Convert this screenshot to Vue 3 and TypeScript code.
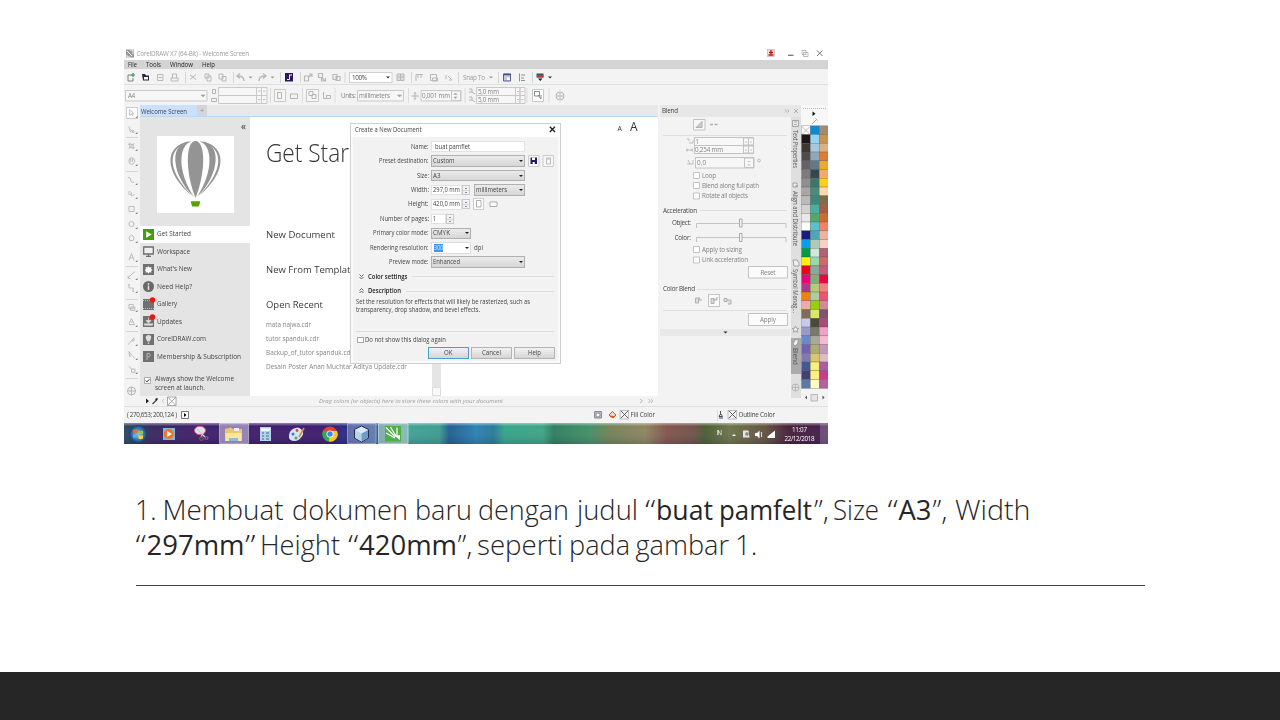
<script setup lang="ts">
import { h } from 'vue'

interface FitProps { t: string; w: number; s?: number; b?: boolean }

// One line of text fitted to an exact width.
const Fit = (p: FitProps) => {
  const s = p.s ?? 6.2
  return h('svg', { width: p.w, height: s * 1.3, style: { display: 'block', overflow: 'visible', flex: 'none' } }, [
    h('text', {
      x: 0, y: s, 'font-size': s, 'font-weight': p.b ? 600 : 400, fill: 'currentColor',
      textLength: p.w, lengthAdjust: 'spacingAndGlyphs',
    }, p.t),
  ])
}
Fit.props = { t: String, w: Number, s: Number, b: Boolean }

interface NavItem { label: string; w: number; icon: string; dot?: boolean }
const nav: NavItem[] = [
  { label: 'Get Started', w: 34, icon: 'play' },
  { label: 'Workspace', w: 33, icon: 'screen' },
  { label: "What's New", w: 35, icon: 'new' },
  { label: 'Need Help?', w: 35, icon: 'info' },
  { label: 'Gallery', w: 20, icon: 'gallery', dot: true },
  { label: 'Updates', w: 25, icon: 'update', dot: true },
  { label: 'CorelDRAW.com', w: 49, icon: 'balloon' },
  { label: 'Membership & Subscription', w: 84, icon: 'member' },
]

const recent = [
  { t: 'mata najwa.cdr', w: 45 },
  { t: 'tutor spanduk.cdr', w: 53 },
  { t: 'Backup_of_tutor spanduk.cdr', w: 87 },
  { t: 'Desain Poster Anan Muchtar Aditya Update.cdr', w: 141 },
]

const swatches: string[][] = [
  ['x', '#0a8ad2', '#a48b6c'], ['#1c1615', '#92d2f6', '#cb9250'], ['#3c3635', '#a9c8df', '#d9b183'],
  ['#4f4b4a', '#8fa9ba', '#e27a34'], ['#666263', '#617a8a', '#f1a832'], ['#7c7a7a', '#364751', '#f9aa62'],
  ['#908e8e', '#3f766a', '#ffd015'], ['#a8a6a6', '#4b8b79', '#fcd9aa'], ['#bcbaba', '#3c897a', '#82694a'],
  ['#d2d0d0', '#49afa0', '#a95a42'], ['#e9e7e7', '#50a86a', '#d16a2d'], ['#ffffff', '#59c0d0', '#f18363'],
  ['#1a1a80', '#49a8b9', '#f1b19a'], ['#04a0ea', '#b1c9b9', '#f8d1c2'], ['#049a46', '#d0e8d8', '#b16273'],
  ['#fff20a', '#99d8a9', '#d1696a'], ['#e60818', '#89a99a', '#c95a79'], ['#e4057f', '#8aa97a', '#e6083e'],
  ['#a93b89', '#b8c879', '#f08282'], ['#f08208', '#b1c9a1', '#f05272'], ['#f4a9a9', '#98d008', '#d18a99'],
  ['#826a5a', '#d8e869', '#825272'], ['#c9c9e8', '#4a4a3a', '#a94a79'], ['#9999cc', '#79796a', '#f0a1c8'],
  ['#6989c8', '#a9a999', '#f8b9d1'], ['#7162b1', '#b1a972', '#c19ab9'], ['#8179b1', '#d8c869', '#e1b9c9'],
  ['#425a91', '#f8f079', '#b15aa1'], ['#424272', '#fff082', '#c93b91'], ['#5a79a9', '#fffcc2', '#b162a1'],
]

const toolSlots = [113, 129, 146, 161, 180, 194, 209, 224, 238, 257, 275, 288, 307, 322, 341, 355, 369]
const toolPaths = [
  'M-2-4L-2 3L0 1L2 4M-2-4L3 1H0', 'M-3-3L-1 4M-2 0L1 3M1 2h2v2h-2z', 'M-4-2H2V4M-2-4V2H4M-3 3L3-3',
  'M-3 0Q-3-4 0-4T4 0Q3 4 0 4T-3 0M-1-3V1M1-3V1', 'M-4-3Q-1-3-1 0T3 3', 'M-4-2Q0-4 0 0T4 0M-4 0Q-1-1 0 2',
  'M-3-3H3V3H-3z', 'M-3 0A3 3 0 1 0 3 0A3 3 0 1 0-3 0', 'M-3-1L0-3.5L3-1L2 3H-2z', 'M-3 4L0-4L3 4M-2 1H2',
  'M-4 3L4-4M-4 1V4H-1', 'M-3-4V0H2V4M-4-4H-2M1 4H3', 'M-3-3H2V2H-3zM-1 0H4V4H-1z', 'M-3 2L0-4L3 2M-3 3H4M-1 0H2',
  'M-4 4L0 0L3-4M0 0H3V-3', 'M-3-4L0 0L-2 2zM1 1L4 4', 'M-3-3L0 0H4V4H0V0',
]
const toolSeps = [137, 171, 266, 299, 331, 378]

const tabSpecs = [
  { t: 'Text Properties', y: 130, w: 38 }, { t: 'Align and Distribute', y: 191, w: 55 },
  { t: 'Symbol Manag...', y: 269, w: 44 }, { t: 'Blend', y: 348, w: 17 },
]

interface Run { t: string; x: number; y: number; w: number; b?: boolean }
const caption: Run[] = [
  { t: '1.', x: 135, y: 520, w: 21.5 }, { t: 'Membuat', x: 162.5, y: 520, w: 121 }, { t: 'dokumen', x: 292, y: 520, w: 116 },
  { t: 'baru', x: 415, y: 520, w: 57 }, { t: 'dengan', x: 478, y: 520, w: 91 }, { t: 'judul', x: 577, y: 520, w: 61 },
  { t: '“', x: 645, y: 520, w: 10.5 }, { t: 'buat', x: 656, y: 520, w: 57, b: true },
  { t: 'pamfelt', x: 719, y: 520, w: 93, b: true }, { t: '”,', x: 814, y: 520, w: 15 },
  { t: 'Size', x: 833, y: 520, w: 46 }, { t: '“', x: 887.5, y: 520, w: 10.5 },
  { t: 'A3', x: 898.5, y: 520, w: 33, b: true }, { t: '”,', x: 932.5, y: 520, w: 15 }, { t: 'Width', x: 955, y: 520, w: 75.5 },
  { t: '“', x: 135.5, y: 555, w: 10.5 }, { t: '297mm', x: 146.5, y: 555, w: 98, b: true }, { t: '”', x: 245, y: 555, w: 10.5 },
  { t: 'Height', x: 260, y: 555, w: 80 }, { t: '“', x: 348, y: 555, w: 10.5 }, { t: '420mm', x: 359, y: 555, w: 98, b: true },
  { t: '”,', x: 457.5, y: 555, w: 15 }, { t: 'seperti', x: 477, y: 555, w: 86 }, { t: 'pada', x: 569, y: 555, w: 61 },
  { t: 'gambar', x: 635.5, y: 555, w: 93.5 }, { t: '1.', x: 735, y: 555, w: 22.5 },
]
</script>

<template>
  <main class="slide">
    <section class="shot">
      <!-- title bar -->
      <svg class="bar" width="704" height="12" viewBox="124 48 704 12">
        <path d="M126 49.5h8v8h-8z" fill="#9b9b9b" /><path d="M127 51l5 5M127 55v2h3M130 50h3v4" stroke="#eee" fill="none" />
        <text class="lt" x="136.500" y="56" textLength="112.500">CorelDRAW X7 (64-Bit) - Welcome Screen</text>
        <rect x="767.500" y="49.500" width="7" height="7" fill="#f4dede" stroke="#c9a5a5" stroke-width=".6" />
        <path d="M771 50v4M769 52.500h4M768.500 55h5" stroke="#c01515" stroke-width="1.300" />
        <path d="M788 55.300h5.500" stroke="#777" stroke-width="1.300" />
        <path d="M802 50.500h4v4h-4zM803.500 52.500h4.500v4h-4.500z" fill="#fff" stroke="#aaa" stroke-width=".8" />
        <path d="M817 50.500l5.500 5.500M822.500 50.500l-5.500 5.500" stroke="#777" stroke-width="1" />
      </svg>
      <!-- menu -->
      <nav class="menu">
        <Fit t="File" :w="9" /><Fit t="Tools" :w="15" /><Fit t="Window" :w="23" /><Fit t="Help" :w="13" />
      </nav>
      <!-- standard toolbar -->
      <svg class="bar tool" width="704" height="15" viewBox="124 69 704 15">
        <path d="M185.500 72v11M233.500 72v11M280.500 72v11M300.500 72v11M345 72v11M411.500 72v11M458.500 72v11M498.500 72v11M532.500 72v11" stroke="#d5d5d5" />
        <path d="M128 75h4M128 75v6h5v-3" fill="none" stroke="#666" stroke-width=".8" /><path d="M133 73v4M131 75h4" stroke="#2c9a4a" stroke-width="1.200" />
        <path d="M142 74h3l1 1.500h3v5h-6z" fill="#292439" /><path d="M144 77h4v2.500h-4z" fill="#fff" />
        <g fill="none" stroke="#b9b9b9">
          <path d="M157.500 74.500h5.500v6h-5.500zM158.500 77.500h3.500M171 78h7v3h-7zM172.500 78v-4h4v4" />
          <path d="M190 75l6 4.500M190 79.500l6-5M205 74h4v4h-4zM207 76h4v5h-4zM219 74h4v5h-4zM222 76.500h4v4.500h-4z" />
          <path d="M244 81q0-5-6-5M240 73.500l-3 2.500l3 2.500" stroke-width="1.400" /><path d="M259 81q0-5 6-5M263 73.500l3 2.500l-3 2.500" stroke-width="1.400" />
          <path d="M304.500 76h4v5h-4zM308 78l4-4M309 74h3v3M318.500 73.500h4v4h-4zM322 78l3 3M321.500 77v4h4v-3M333 74.500h4v5h-4zM336 76.500h4v4h-4z" stroke-width="1.200" />
          <path d="M397 74h7v6.500h-7zM397 77h7M400.500 74v7" fill="#ddd" />
          <path d="M416 81v-6.500h7M418 75v3M421 75v3M430.500 74.500h6v6h-6zM432.500 78h5v3h-5zM446 75v4M448 76l4 4M449 80h3" />
        </g>
        <rect x="285" y="73" width="8" height="8.500" fill="#2c1660" /><path d="M289.500 74.500v5h-2.500M290 75h2" stroke="#fff" fill="none" />
        <rect x="349.500" y="72.500" width="42.500" height="10" fill="#fff" stroke="#d0d0d0" />
        <text x="352" y="79.700" textLength="15" class="dk">100%</text>
        <path d="M248.500 76.500h4l-2 2zM270.500 76.500h4l-2 2zM489 76.500h4l-2 2z" fill="#999" /><path d="M386 76.500h4l-2 2zM548 76.500h4l-2 2z" fill="#333" />
        <text x="463" y="79.700" textLength="22" class="lt">Snap To</text>
        <path d="M503.500 74h7v7h-7z" fill="#c5c9e6" stroke="#58589a" /><path d="M503.500 74.500h7.500" stroke="#494980" stroke-width="1.500" /><path d="M507 77.500h3v2.500h-3z" fill="#fff" />
        <path d="M519.500 73.500v8M521 75h4M521 78h3M521 80.500h4" stroke="#7b9d8b" /><path d="M536.500 73.500h7v4h-7z" fill="#3f4a80" /><path d="M537 75h6.500v2.500h-6.500z" fill="#c33" /><path d="M538 78.500h4.500l-2.200 2.500z" fill="#222" />
      </svg>
      <!-- property bar -->
      <svg class="bar tool line" width="704" height="21" viewBox="124 84 704 21">
        <path d="M270.500 88v15M302.500 88v15M335 88v15M408.500 88v15M465 88v15M527 88v15M549 88v15" stroke="#dcdcdc" />
        <g fill="#f6f6f6" stroke="#c9c9c9">
          <path d="M125.500 90.500h81.500v10.500h-81.500zM218.500 87.500h38v8h-38zM218.500 95.500h38v8h-38zM256.500 87.500h5v8h-5zM261.500 87.500h5.500v8h-5.500zM256.500 95.500h5v8h-5zM261.500 95.500h5.500v8h-5.500z" />
          <path d="M274.500 89.500h11v12h-11zM306.500 89.500h12v12h-12zM357.500 90.500h46v10.500h-46zM421 90.500h40v10.500h-40zM451.500 91h9v9.500h-9z" />
          <path d="M476.500 87.500h39v8h-39zM476.500 95.500h39v8h-39zM515.500 87.500h4.500v8h-4.500zM520 87.500h5v8h-5zM515.500 95.500h4.500v8h-4.500zM520 95.500h5v8h-5z" />
          <path d="M532.500 89.500h11v12h-11z" fill="#fff" />
        </g>
        <g fill="none" stroke="#b4b4b4">
          <path d="M212.500 89.500h3v4h-3zM211.500 98.500h5v3h-5zM277.500 92.500h4v6h-4zM290.500 94h7v4.500h-7z" /><path d="M309 91.500h4v4h-4zM312 94.500h4v4h-4zM323.500 92v6.500h7v-3h-4v3" />
          <path d="M411.500 96h7.500M415 92.500v7M414 93.500l1-1l1 1M414 98.500l1 1l1-1M469 89h3v3h-3M472 92l3 2M469 97h3v3h-3M472 100l3 2" />
          <path d="M534.500 91.500h5v4.500h-5zM538 95l3 4v-4" stroke="#6b7177" stroke-width=".8" /><circle cx="560" cy="96" r="4" /><path d="M556 96h8M560 92v8" />
        </g>
        <path d="M201 95h4l-2 2zM397.500 95h4l-2 2zM454 94.500h3l-1.500-1.500zM454 97h3l-1.500 1.500zM258 91h2.500M263 91h2.500M258 99.500h2.500M263 99.500h2.500M517 91.500h2M521.500 91.500h2M517 99.500h2M521.500 99.500h2" fill="#999" stroke="#aaa" stroke-width=".7" />
        <text x="128" y="98.200" textLength="7">A4</text><text x="341" y="98.200" textLength="15">Units:</text><text x="359" y="98.200" textLength="31">millimeters</text>
        <text x="422" y="98.200" textLength="28">0,001 mm</text><text x="478" y="93.700" textLength="21">5,0 mm</text><text x="478" y="102" textLength="21">5,0 mm</text>
      </svg>

      <div class="work">
        <!-- toolbox -->
        <svg class="toolbox" width="16" height="301" viewBox="124 105 16 301">
          <rect x="126.500" y="107.500" width="11" height="11" fill="#fff" stroke="#ccc" />
          <g v-for="(y, i) in toolSlots" :key="i" :transform="`translate(131.5 ${y}) scale(.85)`">
            <path :d="toolPaths[i]" fill="none" stroke="#b8b8b8" stroke-width="1.100" /><path d="M7 3.500v2.500h-2.500z" fill="#777" />
          </g>
          <path v-for="y in toolSeps" :key="y" :d="`M126 ${y}.5h12`" stroke="#d6d6d6" />
          <circle cx="131.500" cy="391" r="4" fill="none" stroke="#b5b5b5" /><path d="M127.500 391h8M131.500 387v8" stroke="#b5b5b5" />
        </svg>

        <div class="centre">
          <header class="tabs"><div class="tab"><Fit t="Welcome Screen" :w="46" /></div><div class="plus">+</div></header>
          <div class="welcome">
            <aside class="side">
              <div class="collapse">«</div>
              <svg class="logo" width="77" height="77" viewBox="157 136 77 77">
                <rect x="157" y="136" width="77" height="77" fill="#fff" />
                <g transform="translate(195.500 141)" fill="#949494">
                  <path d="M0 0C-10 0-10.500 31 0 57C10.500 31 10 0 0 0z" />
                  <path d="M-4 .5C-26-1-26 32-1.500 56C-18 31-17.500 4-4 .5zM4 .5C26-1 26 32 1.500 56C18 31 17.500 4 4 .5z" />
                  <path d="M-8 1C-31 5-32 32-3 55C-28.500 30-28.500 8-8 1zM8 1C31 5 32 32 3 55C28.500 30 28.500 8 8 1z" />
                </g>
                <path d="M190.700 201.200h9.600l-1.400 5.400h-6.800z" fill="#55a300" />
              </svg>
              <ul class="nav">
                <li v-for="n in nav" :key="n.label" :class="{ on: n.icon === 'play' }">
                  <svg width="11" height="11" viewBox="0 0 11 11">
                    <g v-if="n.icon === 'play'"><rect width="11" height="11" fill="#469c10" /><path d="M3.200 2.200l5.500 3.300l-5.500 3.300z" fill="#fff" /></g>
                    <g v-else-if="n.icon === 'screen'" fill="none" stroke="#6d6d6d"><path d="M.7 1h9.600v7h-9.600z" fill="#eee" stroke-width="1.300" /><path d="M5.500 8v2M3 10.300h5" stroke-width="1.200" /></g>
                    <g v-else-if="n.icon === 'info'"><circle cx="5.500" cy="5.500" r="5.500" fill="#686868" /><path d="M5.500 2v1.700M5.500 4.500v4.500" stroke="#ddd" stroke-width="1.500" /></g>
                    <g v-else>
                      <rect width="11" height="11" fill="#707070" />
                      <path v-if="n.icon === 'new'" d="M5.500 2l1 1.500l2-.5l-.5 2l1.500 1l-1.500 1l.5 1.500l-2-.3l-1 1.500l-1-1.500l-2 .3l.5-1.500l-1.500-1l1.500-1l-.5-2l2 .5z" fill="#fff" />
                      <path v-if="n.icon === 'gallery'" d="M0 1.500h11M0 9.500h11" stroke="#bbb" stroke-dasharray="1 1" />
                      <path v-if="n.icon === 'update'" d="M5.500 1.500v3.500M3 4.500l2.500 2.700l2.500-2.700zM1.500 7.500v1.700h8v-1.700" stroke="#ddd" fill="#ddd" stroke-width=".7" />
                      <path v-if="n.icon === 'balloon'" d="M5.500 1C1.500 1 2.500 5 4.500 7.500h2C8.500 5 9.500 1 5.500 1zM4.700 8.500h1.600v1.200h-1.600z" fill="#ddd" />
                      <path v-if="n.icon === 'member'" d="M4 9v-6.500h2.500q1.500 1.800 0 3.300h-2.500" stroke="#b5b5b5" fill="none" />
                    </g>
                    <circle v-if="n.dot" cx="9.500" cy="1" r="2.700" fill="#f5120c" />
                  </svg>
                  <Fit :t="n.label" :w="n.w" />
                </li>
              </ul>
              <div class="always">
                <svg width="7" height="7" viewBox="0 0 7 7"><path d="M.5.5h6v6h-6z" fill="#fff" stroke="#999" stroke-width=".8" /><path d="M1.700 3.500l1.300 1.500l2.500-3" fill="none" stroke="#333" stroke-width=".9" /></svg>
                <div><Fit t="Always show the Welcome" :w="79" /><Fit t="screen at launch." :w="50" /></div>
              </div>
            </aside>
            <article class="page">
              <div class="sizes"><span>A</span><span class="big">A</span></div>
              <div class="h1"><Fit t="Get Star" :w="83" :s="25.500" /></div>
              <div class="h2"><Fit t="New Document" :w="69" :s="9.800" /></div>
              <div class="h2"><Fit t="New From Templat" :w="84.500" :s="9.800" /></div>
              <div class="h2 last"><Fit t="Open Recent" :w="57" :s="9.800" /></div>
              <div v-for="r in recent" :key="r.t" class="rec"><Fit :t="r.t" :w="r.w" :s="6.300" /></div>
              <div class="scroll"><i /></div>
            </article>
          </div>
          <svg class="drag" width="520" height="10" viewBox="140 396 520 10">
            <path d="M146 398.500l3 2.500l-3 2.500z" fill="#222" /><path d="M152.500 404l4-4" stroke="#444" stroke-width="1.200" /><path d="M155 399l2-1l1 1l-1.500 2z" fill="#222" />
            <path d="M164 399l-2 2l2 2" stroke="#ccc" fill="none" /><path d="M167.500 397h8.500v8.500h-8.500zM167.500 397l8.500 8.500M176 397l-8.500 8.500" fill="#fff" stroke="#888" stroke-width=".7" />
            <text x="319" y="403.200" textLength="184" class="it">Drag colors (or objects) here to store these colors with your document</text>
            <path d="M640 399l2.500 2l-2.500 2M648.500 399l1.800 2l-1.800 2M651 399l1.800 2l-1.800 2" stroke="#bbb" fill="none" />
          </svg>
        </div>

        <!-- blend docker -->
        <svg class="docker" width="168" height="301" viewBox="660 105 168 301">
          <rect x="660" y="105" width="141" height="12" fill="#e7e7e7" />
          <rect x="660" y="117" width="131" height="289" fill="#f3f3f3" />
          <rect x="791" y="117" width="10" height="281" fill="#dfdfdf" />
          <rect x="791" y="338" width="10" height="36" fill="#ababab" />
          <rect x="801" y="105" width="27" height="21" fill="#f7f7f7" />
          <rect x="660" y="329" width="130" height="7" fill="#e8e8e8" />
          <text x="662" y="113.300" textLength="16" class="dk">Blend</text>
          <path d="M785 109.500l1.500 1.500l-1.500 1.500M787.500 109.500l1.500 1.500l-1.500 1.500M794 109l4 4M798 109l-4 4" stroke="#999" fill="none" stroke-width=".7" />
          <g stroke="#dedede"><path d="M663 135.500h124M700 210.500h87M697 289.500h90M663 310.500h124" /></g>
          <g fill="#f7f7f7" stroke="#c3c3c3">
            <path d="M693.500 119.500h11.500v10.500h-11.500zM694.500 137.500h59v8h-59zM694.500 145.500h59v8h-59zM695.500 157.500h58.500v10.500h-58.500zM743.500 138h5v7h-5zM748.500 138h5v7h-5zM743.500 146h5v7h-5zM748.500 146h5v7h-5zM744.500 158h9v9.500h-9z" />
            <path d="M693.500 172.500h6v6h-6zM693.500 182.500h6v6h-6zM693.500 193h6v6h-6zM693.500 246.500h6v6h-6zM693.500 257h6v6h-6z" fill="#fff" />
            <path d="M748.500 266.500h39v11.500h-39zM748.500 313.500h39v12h-39zM708.500 294.500h11v12h-11z" fill="#fbfbfb" />
            <path d="M696.500 228v-4.500h89.500v4.500M696.500 242v-4.500h89.500v4.500" fill="none" />
            <path d="M739.500 219h2.500v8h-2.500zM739.500 233.500h2.500v8h-2.500z" stroke="#a9a9a9" />
          </g>
          <g fill="none" stroke="#b0b0b0">
            <path d="M696 127.500l6-6v6z" fill="#ccc" /><path d="M710 124.500h3M714.500 124.500h3" stroke-width="1.500" /><path d="M687 139h2v2M689 143h4v-3M686 150h7M687 148.500v3M692 148.500v3M688 160l2 4h3v-4M687 164h3" stroke-width=".8" />
            <path d="M695.500 298h3v5h-3zM699 297v3h3M711 298.500h3v5h-3zM713 300h4v-3M724 298.500h3v3h-3zM727 300h4v4h-3" fill="#ddd" />
            <path d="M745 142h2M750 142h2M745 150h2M750 150h2M747.500 161.500h3M747.500 165h3" stroke-width=".7" /><circle cx="759" cy="160.500" r="1.400" stroke-width=".8" />
          </g>
          <g class="mid">
            <text x="695.500" y="143.700">1</text><text x="695" y="152" textLength="28">0,254 mm</text><text x="697" y="165.300" textLength="9">0,0</text>
            <text x="702" y="177.700" textLength="14">Loop</text><text x="702" y="187.800" textLength="57">Blend along full path</text><text x="702" y="198.300" textLength="46">Rotate all objects</text>
            <text x="702" y="251.700" textLength="40">Apply to sizing</text><text x="702" y="262.200" textLength="46">Link acceleration</text>
            <text x="760.500" y="274.500" textLength="15">Reset</text><text x="760" y="321.700" textLength="16">Apply</text>
          </g>
          <g class="dk"><text x="663" y="212.600" textLength="34">Acceleration</text><text x="672" y="225" textLength="19">Object:</text><text x="674.500" y="239.500" textLength="16.500">Color:</text><text x="663" y="291" textLength="32">Color Blend</text></g>
          <path d="M723.500 331.500h4l-2 2z" fill="#222" />
          <text v-for="s in tabSpecs" :key="s.t" :transform="`translate(793.3 ${s.y}) rotate(90)`" :textLength="s.w" lengthAdjust="spacingAndGlyphs" class="vt">{{ s.t }}</text>
          <g fill="#eee" stroke="#888" stroke-width=".7">
            <path d="M792.500 120.500h6v6h-6zM794 122h3M794 124.500h3M793 183h4v4h-4zM795 186h3M793 260h4l2 3v3h-5z" />
            <path d="M795.500 326l1 2.200l2.300.3l-1.800 1.500l.5 2.300l-2-1.200l-2 1.200l.5-2.300l-1.800-1.500l2.300-.3zM793 344l2-4l3-1v4l-3 3z" /><path d="M792 387.500h7M795.500 384v7M792 387.500a3.500 3.500 0 1 0 7 0a3.500 3.500 0 1 0-7 0" stroke="#aaa" fill="none" />
          </g>
          <path d="M803 108.500h24" stroke="#bbb" stroke-dasharray="1 1" /><path d="M812.500 111.500l3 2.200l-3 2.200z" fill="#111" /><path d="M812 124l4.500-4.500M815.500 118.500l2 2" stroke="#aaa" />
          <g v-for="(row, r) in swatches" :key="r">
            <g v-for="(c, k) in row" :key="k">
              <rect :x="801.5 + k * 8.9" :y="125.8 + r * 8.75" width="8.9" height="8.75" :fill="c === 'x' ? '#fff' : c" stroke="#4a4a4a" stroke-opacity=".55" stroke-width=".5" />
            </g>
          </g>
          <path d="M802 126.500l8 8M810 126.500l-8 8" stroke="#888" stroke-width=".6" />
          <path d="M807 395.500v4l-2-2zM822.500 395.500v4l2-2z" fill="#555" /><path d="M811 394.500h6.500v6.500h-6.500z" fill="#e5e5e5" stroke="#aaa" stroke-width=".8" />
        </svg>
      </div>

      <!-- status bar -->
      <svg class="bar tool line" width="704" height="17" viewBox="124 406 704 17">
        <g class="dk"><text x="127" y="417" textLength="50">( 270,653; 200,124 )</text><text x="630.500" y="417" textLength="24.500">Fill Color</text><text x="738.500" y="417" textLength="36.500">Outline Color</text></g>
        <path d="M181.500 411.500h7v7h-7z" fill="#fff" stroke="#555" stroke-width=".8" /><path d="M184 413l2.500 2l-2.500 2z" fill="#000" />
        <path d="M594.500 411.500h7v6.500h-7z" fill="#b8b8c8" stroke="#8a8aa0" /><circle cx="598" cy="415" r="2" fill="#fff" stroke="#8a6868" stroke-width=".7" />
        <path d="M609 415l3.500-3.500l3.500 3.500l-3 3z" fill="#f5d8c5" stroke="#79493a" stroke-width=".8" /><path d="M610 416.500h5" stroke="#e05a12" stroke-width="1.300" />
        <path d="M620.500 410.500l8 8M628.500 410.500l-8 8M728.500 410.500l8 8M736.500 410.500l-8 8" fill="none" stroke="#555" stroke-width=".9" /><path d="M620 410.500h8.500v8.500h-8.500zM728 410.500h8.500v8.500h-8.500z" fill="none" stroke="#aaa" stroke-width=".7" />
        <path d="M717.500 410v11" stroke="#ddd" /><path d="M720.500 411v3l-1.500 2.500h3.500l-1.500-2.500M719 418h4" stroke="#333a50" fill="none" stroke-width=".9" />
      </svg>

      <!-- taskbar -->
      <svg class="bar" width="704" height="21" viewBox="124 423 704 21">
        <defs>
          <linearGradient id="wall" gradientUnits="userSpaceOnUse" x1="124" x2="828" y1="0" y2="0">
            <stop offset="0" stop-color="#2e4a62" /><stop offset=".04" stop-color="#3a2a60" /><stop offset=".09" stop-color="#40216b" /><stop offset=".28" stop-color="#3f1d70" />
            <stop offset=".315" stop-color="#2c2c83" /><stop offset=".36" stop-color="#35618f" /><stop offset=".405" stop-color="#41a397" /><stop offset=".448" stop-color="#3d9f91" />
            <stop offset=".462" stop-color="#235f92" /><stop offset=".5" stop-color="#2e82b4" /><stop offset=".525" stop-color="#2b7b9a" /><stop offset=".54" stop-color="#36a58a" />
            <stop offset=".595" stop-color="#3fa585" /><stop offset=".61" stop-color="#2f7f62" /><stop offset=".66" stop-color="#439168" /><stop offset=".69" stop-color="#73835a" />
            <stop offset=".74" stop-color="#8f8660" /><stop offset=".77" stop-color="#84564e" /><stop offset=".81" stop-color="#70534b" /><stop offset=".825" stop-color="#4c5e35" />
            <stop offset=".86" stop-color="#6d754c" /><stop offset=".91" stop-color="#665443" /><stop offset=".945" stop-color="#48203b" /><stop offset="1" stop-color="#432050" />
          </linearGradient>
          <linearGradient id="glass" x2="0" y2="1"><stop offset="0" stop-color="#fff" stop-opacity=".45" /><stop offset=".15" stop-color="#fff" stop-opacity="0" /><stop offset="1" stop-color="#101030" stop-opacity=".15" /></linearGradient>
          <radialGradient id="orb"><stop offset="0" stop-color="#8fd0f0" /><stop offset=".7" stop-color="#2d6ea8" /><stop offset="1" stop-color="#183c68" /></radialGradient>
        </defs>
        <rect x="124" y="423" width="704" height="21" fill="url(#wall)" /><rect x="124" y="423" width="704" height="21" fill="url(#glass)" />
        <circle cx="138" cy="434" r="9" fill="url(#orb)" />
        <path d="M133 430q2.500-1.500 4.500 0v3.500q-2.500-1-4.500 0z" fill="#f06a30" /><path d="M138.500 430.500q2 1.500 4.500 0v3.500q-2.500 1.300-4.500 0z" fill="#98c848" /><path d="M133 434.500q2.500-1 4.500 0v3.500q-2-1.300-4.500 0z" fill="#55b0f0" /><path d="M138.500 435q2.500 1.200 4.500 0v3.500q-2.500 1.300-4.500 0z" fill="#f9cf45" />
        <path d="M163 428h12v12h-12z" fill="#87b3df" /><circle cx="168.800" cy="434" r="5" fill="#ed7625" /><path d="M167 431l5 3l-5 3z" fill="#fff" />
        <ellipse cx="200" cy="430.500" rx="5.500" ry="4.200" fill="#efdde7" stroke="#d35a83" /><path d="M197 429l8 8M203 433l-2 4" stroke="#c3cbdf" stroke-width="1.200" /><circle cx="201.500" cy="438.500" r="1.800" fill="none" stroke="#d84555" /><circle cx="206.500" cy="438" r="1.500" fill="none" stroke="#6f7ba5" />
        <path d="M219.500 423.500h29v20h-29z" fill="#c6bfe3" opacity=".62" stroke="#eee" /><path d="M225 429l6-1.500l2 1.500h9v12h-17z" fill="#e9c868" /><path d="M225.500 433h16v8h-16z" fill="#fae6a0" /><path d="M229 441v-3h9v3z" fill="#87bedc" /><path d="M234 428h5v3h-5z" fill="#eef" />
        <path d="M260 427h11v14h-11z" fill="#b7d3ea" /><path d="M261 428.500h9v2.500h-9z" fill="#f5fbff" /><path d="M262 433h2M266 433h3M262 436h2M266 436h3M262 439h2M266 439h3" stroke="#638fb8" stroke-width="1.500" />
        <path d="M289 435q1-7 9-7.500q6 2 5 7q-3 6-8 6.500q-7 0-6-6z" fill="#d5e5f4" /><circle cx="293" cy="434" r="1.500" fill="#3f7bd0" /><circle cx="297" cy="430.500" r="1.400" fill="#da4a40" /><circle cx="296" cy="438" r="1.500" fill="#48a850" /><path d="M304 428l-5 9" stroke="#d88b35" stroke-width="1.600" />
        <circle cx="330" cy="434" r="7.500" fill="#e34234" /><path d="M330 434L323.500 430A7.500 7.500 0 0 0 329 441.500z" fill="#35a853" /><path d="M330 434h7.500A7.500 7.500 0 0 1 329 441.500z" fill="#fbc62a" /><path d="M331 431h6a7.500 7.500 0 0 1-8 10.500z" fill="#fbc62a" /><circle cx="330" cy="434" r="3.500" fill="#fff" /><circle cx="330" cy="434" r="2.700" fill="#4387ee" />
        <path d="M347.500 423.500h28.500v20h-28.500z" fill="#8c9bcf" opacity=".55" stroke="#dde" /><path d="M361.500 426l7 3.500v8.500l-7 4l-7-4v-8.500z" fill="#dce9f4" stroke="#20304f" /><path d="M361.500 433.500v8l-6.500-3.800v-7.700z" fill="#b9d3e6" /><path d="M361.500 433.500v8l6.500-3.800v-7.700z" fill="#6e9cc6" />
        <path d="M378.500 423.500h29.500v20h-29.500z" fill="#a7cac6" opacity=".7" stroke="#dee" /><path d="M385 426h16v15.500h-16z" fill="#4fae48" /><path d="M386 427.500l9 9M390.500 427l6 10M397 427.500v9M386 433l9 5" stroke="#fff" stroke-width="1.200" /><path d="M395 436l5 4v-5z" fill="#fff" />
        <g fill="#fff">
          <text x="717" y="435" class="wt" textLength="5">IN</text><path d="M732 436h4l-2-2z" /><path d="M743 430.500h5.500l1 7h-6.500z" fill="#e5e5e8" /><path d="M746 432l3 1l-1 3l-3-1z" fill="#888" />
          <path d="M755 433h2l2.500-2.500v8l-2.500-2.500h-2zM761 432v5h.8v-5zM767.500 438v-1.500l7.500-6v7.500z" />
          <text x="792" y="432.300" class="wt" textLength="15">11:07</text><text x="784.500" y="441" class="wt" textLength="30">22/12/2018</text>
        </g>
        <path d="M820.500 424h7v19.500h-7z" fill="#b79cc4" opacity=".35" stroke="#cbb5d5" stroke-width=".7" />
      </svg>

      <!-- dialog -->
      <div class="dialog">
        <header><Fit t="Create a New Document" :w="66.500" /><svg width="7" height="7" viewBox="0 0 7 7"><path d="M.8.8l5.200 5.200M6 .8L.8 6" stroke="#222" stroke-width="1.400" /></svg></header>
        <div class="form">
          <div class="row"><label><Fit t="Name:" :w="17.500" /></label><div class="in wide"><Fit t="buat pamflet" :w="35" /></div></div>
          <div class="row"><label><Fit t="Preset destination:" :w="49.500" /></label><div class="sel wide"><Fit t="Custom" :w="21.500" /></div>
            <svg class="gap" width="26" height="12" viewBox="0 0 26 12"><path d="M.5.5h10.500v11H.5zM15 .5h10.500v11H15z" fill="#f7f7f7" stroke="#ccc" /><path d="M2.500 2.500h6.500v6.500h-6.500z" fill="#251c58" /><path d="M4 2.500h3v2.500h-3zM4.700 7h2v2h-2z" fill="#fff" /><path d="M18.500 4h4v5h-4zM18 3h5" fill="none" stroke="#bbb" /></svg></div>
          <div class="row"><label><Fit t="Size:" :w="12" /></label><div class="sel wide"><Fit t="A3" :w="7.500" /></div></div>
          <div class="row"><label><Fit t="Width:" :w="18" /></label><div class="in num"><Fit t="297,0 mm" :w="27" /></div><i class="spin" /><div class="sel unit"><Fit t="millimeters" :w="31" /></div></div>
          <div class="row"><label><Fit t="Height:" :w="20.500" /></label><div class="in num"><Fit t="420,0 mm" :w="27" /></div><i class="spin" />
            <svg class="gap" width="32" height="12" viewBox="0 0 32 12"><path d="M.5.5h10v11H.5z" fill="#fff" stroke="#ccc" /><path d="M3.500 2.500h4.500v6.500h-4.500zM17 4h7v4.500h-7z" fill="#fff" stroke="#999" stroke-width=".8" /></svg></div>
          <div class="row"><label><Fit t="Number of pages:" :w="49" /></label><div class="in pages"><Fit t="1" :w="3" /></div><i class="spin" /></div>
          <div class="row"><label><Fit t="Primary color mode:" :w="55.500" /></label><div class="sel short"><Fit t="CMYK" :w="17" /></div></div>
          <div class="row"><label><Fit t="Rendering resolution:" :w="58.500" /></label><div class="sel short plain"><div class="hl"><Fit t="300" :w="9.500" /></div></div><span class="dpi"><Fit t="dpi" :w="9" /></span></div>
          <div class="row"><label><Fit t="Preview mode:" :w="39.500" /></label><div class="sel wide"><Fit t="Enhanced" :w="27" /></div></div>
        </div>
        <div class="sect"><svg width="5" height="6" viewBox="0 0 5 6"><path d="M.5.5l2 2l2-2M.5 3l2 2l2-2" fill="none" stroke="#444" stroke-width=".8" /></svg><Fit t="Color settings" :w="39.500" b /><hr /></div>
        <div class="sect"><svg width="5" height="6" viewBox="0 0 5 6"><path d="M.5 2.500l2-2l2 2M.5 5l2-2l2 2" fill="none" stroke="#444" stroke-width=".8" /></svg><Fit t="Description" :w="33" b /><hr /></div>
        <div class="desc"><Fit t="Set the resolution for effects that will likely be rasterized, such as" :w="174" /><Fit t="transparency, drop shadow, and bevel effects." :w="124" /></div>
        <div class="again"><i /><Fit t="Do not show this dialog again" :w="81" /></div>
        <div class="btns"><div class="ok"><Fit t="OK" :w="8.500" /></div><div><Fit t="Cancel" :w="19" /></div><div><Fit t="Help" :w="13" /></div></div>
      </div>
    </section>

    <svg class="caption" width="1009" height="92" viewBox="136 484 1009 92">
      <text v-for="(r, i) in caption" :key="i" :class="{ b: r.b }" :x="r.x" :y="r.y" :textLength="r.w" lengthAdjust="spacingAndGlyphs">{{ r.t }}</text>
    </svg>
    <hr class="rule" />
    <footer />
  </main>
</template>

<style scoped>
.slide { width: 1280px; height: 720px; background: #fff; overflow: hidden; display: flex; flex-direction: column; box-sizing: border-box; padding-top: 48px; }
.shot { position: relative; width: 704px; height: 396px; flex: none; margin-left: 124px; overflow: hidden; background: #fff; font-family: "Open Sans", "Noto Sans", sans-serif; color: #555; filter: blur(.45px); }
.shot text { font-size: 6.3px; fill: #858585; }
.shot text.lt, .shot .lt { fill: #9c9c9c; }
.shot text.dk, .dk text { fill: #444; }
.shot text.it { font-style: italic; fill: #a0a0a0; font-size: 6px; }
.shot text.vt { fill: #555; font-size: 6.8px; }
.shot text.wt { fill: #fff; font-size: 6.3px; }
.bar { display: block; }
.tool { background: #f3f3f3; }
.line { box-shadow: inset 0 1px #dfdfdf; }
.menu { height: 9px; background: #d4d4d4; display: flex; align-items: center; gap: 9px; padding: 1px 0 0 4px; box-sizing: border-box; color: #222; }
.menu :deep(text), .dialog :deep(text), .tab :deep(text) { fill: currentColor; }
.work { height: 301px; display: flex; background: #f3f3f3; overflow: hidden; }
.toolbox, .docker { flex: none; display: block; }
.centre { width: 520px; height: 301px; display: flex; flex-direction: column; }
.tabs { height: 12px; width: 518px; background: #e8e8e8; display: flex; border-bottom: 1px solid #bcd7f3; box-sizing: border-box; }
.tab { width: 57px; background: #cbe0fb; padding: 2.5px 0 0 1px; box-sizing: border-box; color: #345; }
.plus { width: 10px; background: #d5d5d5; font-size: 8px; line-height: 10px; text-align: center; color: #999; }
.welcome { height: 279px; width: 518px; display: flex; background: #fff; }
.side { width: 110px; background: #e4e4e4; flex: none; overflow: hidden; }
.collapse { height: 19px; box-sizing: border-box; padding: 3px 4px 0 0; text-align: right; font-size: 10px; line-height: 12px; color: #333; }
.logo { display: block; margin-left: 17px; }
.nav { list-style: none; margin: 12.7px 0 0; padding: 0; }
.nav li { height: 17.5px; display: flex; align-items: center; gap: 2.5px; padding-left: 3px; color: #444; }
.nav :deep(text), .always :deep(text) { fill: #444; }
.nav li > svg { overflow: visible; flex: none; }
.nav li.on { background: #fff; }
.always { display: flex; gap: 4px; padding: 9.5px 0 0 4px; }
.always > div { display: flex; flex-direction: column; gap: .7px; }
.always > svg { margin-top: 1.5px; }
.page { flex: 1; position: relative; padding-left: 15.5px; color: #333; }
.sizes { height: 19px; display: flex; justify-content: flex-end; align-items: baseline; gap: 8px; padding: 1px 20.5px 0 0; box-sizing: border-box; font-size: 7px; line-height: 18px; color: #333; }
.sizes .big { font-size: 12px; }
.h1 { height: 86px; box-sizing: border-box; }
.h1 :deep(text) { font-weight: 300; font-size: 25.5px; fill: #333; }
.h2 { height: 35px; padding-top: 5.5px; box-sizing: border-box; }
.h2.last { height: 23px; }
.h2 :deep(text) { font-size: 9.8px; fill: #3a3a3a; }
.rec { height: 14px; padding-top: 6px; box-sizing: border-box; color: #858585; }
.scroll { position: absolute; left: 182px; top: 20px; width: 9px; height: 259px; background: #e5e5e5; display: flex; align-items: flex-end; }
.scroll i { width: 9px; height: 9px; background: #f8f8f8; border: 1px solid #ddd; box-sizing: border-box; }
.drag { display: block; background: #f3f3f3; }
.dialog { position: absolute; left: 226px; top: 75px; width: 211px; height: 241px; box-sizing: border-box; background: #f2f2f2; border: 1px solid #cfcfcf; box-shadow: inset 0 0 0 2px #fafafa; color: #444; }
.dialog header { height: 13px; background: #fff; display: flex; align-items: center; justify-content: space-between; padding: 0 4.5px 0 4px; }
.dialog header > svg:last-child { margin-top: -2px; }
.form { display: flex; flex-direction: column; padding-top: 2.5px; }
.row { height: 14.45px; display: flex; align-items: center; }
label { width: 77.5px; display: flex; justify-content: flex-end; margin-right: 2.5px; flex: none; }
.in { height: 10.5px; background: #fff; border: 1px solid #e2e2e2; box-sizing: border-box; display: flex; align-items: center; padding-left: 1px; }
.in.wide { padding-left: 2.5px; }
.wide { width: 94px; }
.num { width: 31px; }
.pages { width: 15px; }
.spin { width: 8px; height: 10px; border: 1px solid #c8c8d0; box-sizing: border-box; background: linear-gradient(#8a8a9a, #8a8a9a) center 2px / 2px 1px no-repeat, linear-gradient(#8a8a9a, #8a8a9a) center 6px / 2px 1px no-repeat, linear-gradient(#c8c8d0, #c8c8d0) center / 8px .7px no-repeat, #f3f3f6; }
.sel { height: 11.5px; border: 1px solid #b0b0b0; box-sizing: border-box; display: flex; align-items: center; justify-content: space-between; background: linear-gradient(#ebebeb, #d6d6d6); padding: 0 1.5px 0 1px; }
.sel::after { content: ""; border: 2px solid transparent; border-top: 2.5px solid #222; border-bottom: 0; }
.unit { width: 51px; margin-left: 4px; }
.short { width: 40px; }
.sel.plain { background: #fff; border-color: #ddd; }
.hl { background: #3797ff; color: #d5eaff; margin-left: .5px; }
.gap { margin-left: 3px; display: block; }
.dpi { margin-left: 3px; }
.sect { height: 14.5px; display: flex; align-items: center; padding: 0 6px 0 8px; gap: 4.5px; color: #222; }
.sect > svg:first-child { margin-right: -.5px; }
.sect hr { flex: 1; border: 0; height: 1px; background: #ddd; margin: 0; }
.desc { height: 33px; margin: 0 6px 0 5px; border-bottom: 1px solid #ddd; }
.again { display: flex; align-items: center; gap: 1.5px; height: 15px; padding-left: 6px; }
.again i { width: 6.5px; height: 6.5px; border: 1px solid #aaa; background: #fff; box-sizing: border-box; }
.btns { display: flex; justify-content: flex-end; gap: 2.5px; padding-right: 5.5px; }
.btns > div { width: 40.5px; height: 12px; box-sizing: border-box; border: 1px solid #b3b3b3; background: linear-gradient(#f2f2f2, #d5d5d5); display: flex; align-items: center; justify-content: center; }
.btns .ok { border: 1.5px solid #45a2c9; }
.caption { display: block; margin: 40px 0 0 136px; overflow: visible; flex: none; }
.caption text { font-family: "Open Sans", Lato, sans-serif; font-weight: 300; font-size: 28px; fill: #262626; font-variant-ligatures: none; }
.caption text.b { font-weight: 500; }
.rule { width: 1009px; height: 1px; border: 0; background: #404040; margin: 9px 0 0 136px; flex: none; }
footer { margin-top: auto; height: 48px; background: #262626; flex: none; }
</style>

<style>
html, body { margin: 0; overflow: hidden; }
</style>
